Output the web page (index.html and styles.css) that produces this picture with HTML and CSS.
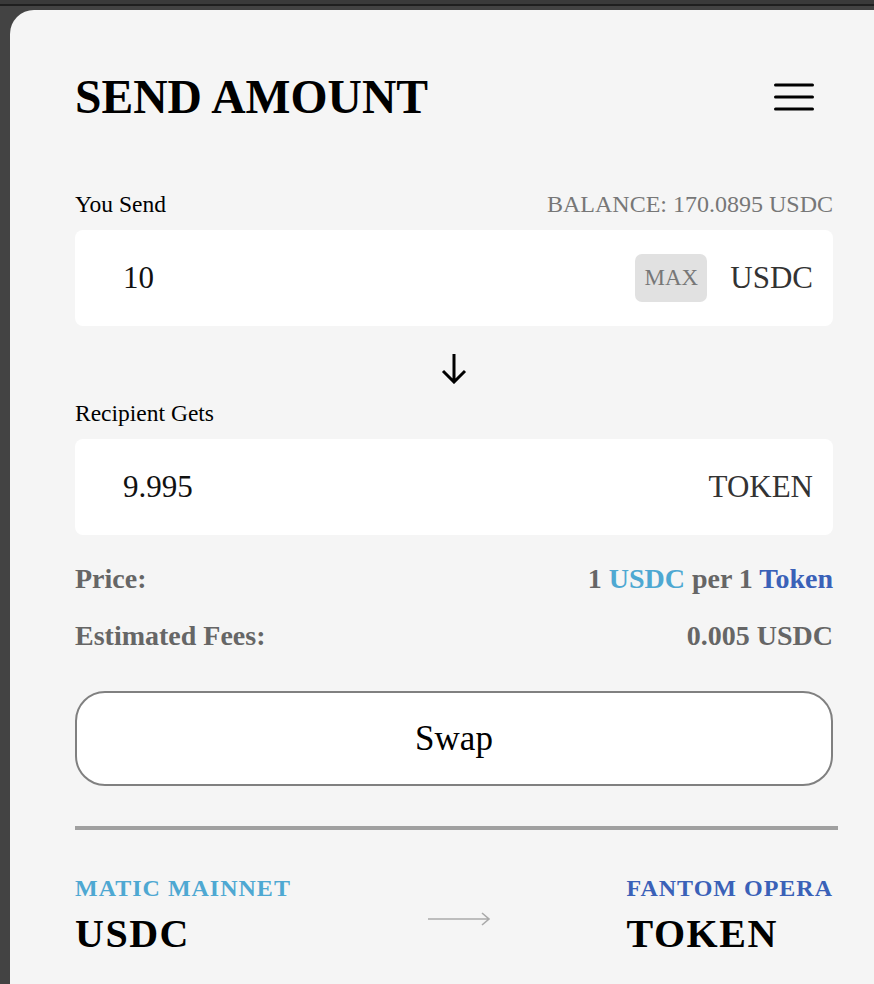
FILE: index.html
```html
<!doctype html>
<html lang="en">
  <head>
    <meta charset="UTF-8" />
    <meta name="viewport" content="width=device-width, initial-scale=1.0" />
    <title>Send Amount</title>
    <link rel="stylesheet" href="styles.css">
  </head>

  <body>
    <main class="sheet">
      <header class="header">
        <h1>SEND AMOUNT</h1>
        <button class="menu" aria-label="Menu">
          <svg width="40" height="30" viewBox="0 0 40 30">
            <path d="M1.5 3h37M1.5 15h37M1.5 27h37" stroke="#000" stroke-width="3" stroke-linecap="round" />
          </svg>
        </button>
      </header>

      <div class="field-label">
        <span>You Send</span>
        <span class="balance">BALANCE: 170.0895 USDC</span>
      </div>
      <div class="amount-box">
        <span class="amount">10</span>
        <button class="max">MAX</button>
        <span class="unit">USDC</span>
      </div>

      <div class="down">
        <svg width="32" height="32" viewBox="0 0 32 32">
          <path d="M16 2v28M5 19l11 11 11-11" fill="none" stroke="#000" stroke-width="3" />
        </svg>
      </div>

      <div class="field-label">
        <span>Recipient Gets</span>
      </div>
      <div class="amount-box">
        <span class="amount">9.995</span>
        <span class="unit">TOKEN</span>
      </div>

      <dl class="details">
        <div class="row">
          <dt>Price:</dt>
          <dd>1 <span class="matic">USDC</span> per 1 <span class="fantom">Token</span></dd>
        </div>
        <div class="row">
          <dt>Estimated Fees:</dt>
          <dd>0.005 USDC</dd>
        </div>
      </dl>

      <button class="swap">Swap</button>

      <hr class="divider" />

      <section class="route">
        <div class="chain">
          <div class="network matic">MATIC MAINNET</div>
          <div class="token">USDC</div>
        </div>
        <svg class="route-arrow" width="64" height="16" viewBox="0 0 64 16">
          <path d="M1 8h61M55 2l7 6-7 6" fill="none" stroke="#aaa" stroke-width="1.6" />
        </svg>
        <div class="chain">
          <div class="network fantom">FANTOM OPERA</div>
          <div class="token">TOKEN</div>
        </div>
      </section>
    </main>
  </body>
</html>
```

FILE: styles.css
```css
html,
body {
  margin: 0;
  height: 100%;
}

body {
  background: linear-gradient(#3a3a3a 0 4px, #1f1f1f 4px 6px, #434343 6px);
  font-family: "Liberation Serif", "Times New Roman", serif;
  overflow: hidden;
}

.sheet {
  margin: 10px 0 0 10px;
  min-height: calc(100% - 10px);
  box-sizing: border-box;
  padding: 59px 41px 40px 65px;
  background: #f5f5f5;
  border-top-left-radius: 24px;
}

.header {
  display: flex;
  align-items: center;
  justify-content: space-between;
  margin-bottom: 65px;

  & h1 {
    margin: 0;
    font-size: 47.6px;
    line-height: 56px;
    font-weight: bold;
  }
}

.menu {
  display: block;
  padding: 0;
  margin-right: 19px;
  border: 0;
  background: none;

  & svg {
    display: block;
  }
}

.field-label {
  display: flex;
  justify-content: space-between;
  font-size: 23.5px;
  line-height: 28px;
  margin-bottom: 12px;

  & .balance {
    color: #777;
    font-size: 24px;
  }
}

.amount-box {
  display: flex;
  align-items: center;
  height: 96px;
  padding: 0 20px 0 48px;
  background: #fff;
  border-radius: 8px;
  font-size: 31px;

  & .amount {
    flex: 1;
    color: #111;
  }

  & .unit {
    color: #333;
  }
}

.max {
  width: 72px;
  height: 48px;
  margin-right: 23px;
  padding: 0;
  border: 0;
  border-radius: 7px;
  background: #e1e1e1;
  color: #777;
  font-family: inherit;
  font-size: 23px;
}

.down {
  display: flex;
  justify-content: center;
  margin: 26px 0 15px;

  & svg {
    display: block;
  }
}

.details {
  margin: 27px 0 0;
  font-size: 28px;
  line-height: 34px;
  font-weight: bold;
  color: #666;

  & .row {
    display: flex;
    justify-content: space-between;
    margin-bottom: 23px;
  }

  & dd {
    margin: 0;
  }
}

.matic {
  color: #4ea8d2;
}

.fantom {
  color: #3a61b8;
}

.swap {
  display: block;
  width: 100%;
  height: 95px;
  margin-top: 38px;
  border: 2px solid #808080;
  border-radius: 30px;
  background: #fff;
  color: #000;
  font-family: inherit;
  font-size: 35px;
}

.divider {
  height: 4px;
  margin: 40px -5px 44px 0;
  border: 0;
  background: #a0a0a0;
}

.route {
  display: flex;
  align-items: center;
  justify-content: space-between;

  & .route-arrow {
    display: block;
    margin-top: 6px;
  }
}

.chain {
  font-weight: bold;

  & .network {
    font-size: 24px;
    line-height: 28px;
    letter-spacing: 1px;
  }

  & .token {
    margin-top: 9px;
    font-size: 40px;
    line-height: 46px;
    letter-spacing: 1.5px;
    color: #000;
  }
}
```
